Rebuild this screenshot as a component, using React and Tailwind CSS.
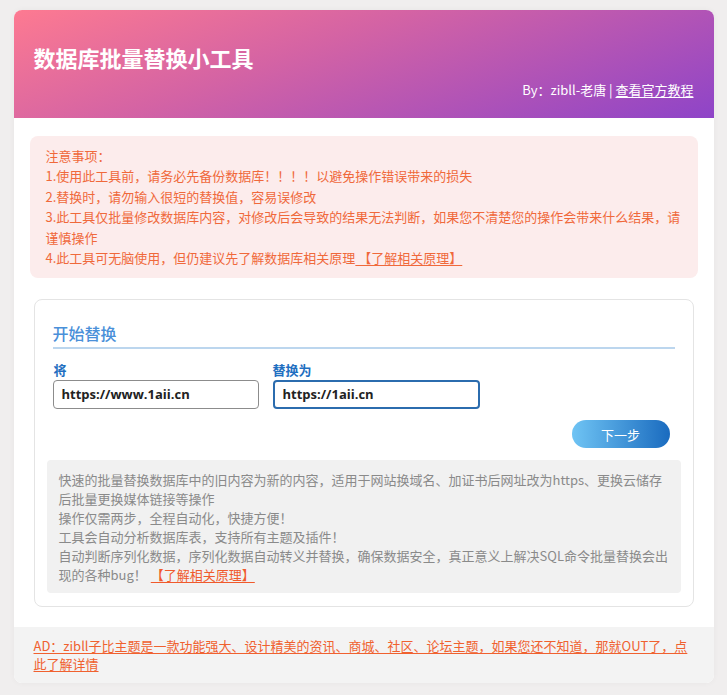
export default function App() {
  const cjk = { fontFamily: '"Noto Sans CJK SC", "Noto Sans", sans-serif' };
  return (
    <div className="min-h-[695px] w-full bg-[#f0eeee] pt-[10px] pb-[14px]" style={cjk}>
      <div className="mx-auto w-[700px] rounded-[8px] bg-white shadow-[0_0_6px_rgba(0,0,0,0.04)]">
        {/* header */}
        <div className="flex h-[108px] flex-col rounded-t-[8px] bg-[linear-gradient(160deg,#fd7a91_0%,#d463a4_40%,#8e44c8_100%)] px-5 pt-[33px] text-white">
          <div className="text-[22px] font-bold leading-[28px]">数据库批量替换小工具</div>
          <div className="mt-[9px] text-right text-[13px] leading-[20px]">
            By：zibll-老唐 | <span className="underline underline-offset-2">查看官方教程</span>
          </div>
        </div>

        {/* body */}
        <div className="px-4 pt-[18px] pb-[20px]">
          <div className="rounded-[8px] bg-[#fcecec] px-4 py-[10px] text-[13px] leading-[20.4px] text-[#f0693b]">
            <div>注意事项：</div>
            <div>1.使用此工具前，请务必先备份数据库！！！！以避免操作错误带来的损失</div>
            <div>2.替换时，请勿输入很短的替换值，容易误修改</div>
            <div>3.此工具仅批量修改数据库内容，对修改后会导致的结果无法判断，如果您不清楚您的操作会带来什么结果，请谨慎操作</div>
            <div>
              4.此工具可无脑使用，但仍建议先了解数据库相关原理<span className="underline underline-offset-2"> 【了解相关原理】</span>
            </div>
          </div>

          <div className="mx-[4px] mt-[21px] rounded-[8px] border border-[#e4e4e4] px-[12px] pt-[21px] pb-[13px]">
            <div className="px-[6px]">
              <div className="border-b-2 border-[#bcd6ee] pb-[2px] text-[16px] font-medium leading-[24px] text-[#4a90d9]">开始替换</div>
              <div className="mt-[13px] flex gap-[14px]">
                <div className="flex w-[206px] flex-col">
                  <div className="pl-[1px] text-[13px] font-bold leading-[16px] text-[#1f6fc1]">将</div>
                  <div className="mt-[2px] flex h-[29px] items-center rounded-[4px] border border-[#8c8c8c] px-[8px] text-[13px] font-bold text-[#222]" style={{ fontFamily: '"Open Sans", "Noto Sans", sans-serif' }}>
                    https://www.1aii.cn
                  </div>
                </div>
                <div className="flex w-[207px] flex-col">
                  <div className="text-[13px] font-bold leading-[16px] text-[#1f6fc1]">替换为</div>
                  <div className="mt-[2px] flex h-[29px] items-center rounded-[4px] border-2 border-[#2b6cae] px-[8px] text-[13px] font-bold text-[#222]" style={{ fontFamily: '"Open Sans", "Noto Sans", sans-serif' }}>
                    https://1aii.cn
                  </div>
                </div>
              </div>
              <div className="mt-[11px] flex justify-end pr-[5px]">
                <div className="flex h-[28px] w-[98px] items-center justify-center rounded-full bg-[linear-gradient(90deg,#6fc4f4,#1a6bbf)] text-[13px] text-white">
                  下一步
                </div>
              </div>
            </div>
            <div className="mt-[12px] rounded-[4px] bg-[#f1f1f1] px-[12px] pt-[10px] pb-[9px] text-[13px] leading-[19px] text-[#8a8a8a]">
              <div>快速的批量替换数据库中的旧内容为新的内容，适用于网站换域名、加证书后网址改为https、更换云储存后批量更换媒体链接等操作</div>
              <div>操作仅需两步，全程自动化，快捷方便！</div>
              <div>工具会自动分析数据库表，支持所有主题及插件！</div>
              <div>
                自动判断序列化数据，序列化数据自动转义并替换，确保数据安全，真正意义上解决SQL命令批量替换会出现的各种bug！<span className="ml-[4px] text-[#f05a2c] underline underline-offset-2">【了解相关原理】</span>
              </div>
            </div>
          </div>
        </div>

        {/* footer */}
        <div className="rounded-b-[8px] bg-[#f3f3f3] px-5 py-[10px] text-[13px] leading-[18px] text-[#f0612f]">
          <span className="underline underline-offset-2">AD：zibll子比主题是一款功能强大、设计精美的资讯、商城、社区、论坛主题，如果您还不知道，那就OUT了，点此了解详情</span>
        </div>
      </div>
    </div>
  );
}
